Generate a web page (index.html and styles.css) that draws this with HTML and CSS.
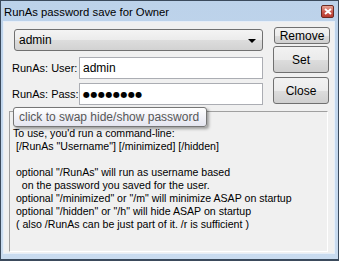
FILE: index.html
```html
<!DOCTYPE html>
<html>
<head>
    <title>RunAs password save for Owner</title>
    <link rel="stylesheet" href="styles.css">
</head>
<body>
    <div class="window">
        <div class="titlebar">
            <span class="title">RunAs password save for Owner</span>
            <div class="close-x">
                <svg width="8" height="7" viewBox="0 0 8 7"><path d="M1 1 L7 6 M7 1 L1 6" stroke="#fff" stroke-width="2"/></svg>
            </div>
        </div>
        <div class="client">
            <div class="top">
                <div class="left">
                    <div class="combo">
                        <span>admin</span>
                        <span class="arrow"></span>
                    </div>
                    <div class="row">
                        <label class="label">RunAs: User:</label>
                        <div class="field">admin</div>
                    </div>
                    <div class="row row-pass">
                        <label class="label">RunAs: Pass:</label>
                        <div class="field dots">&#9679;&#9679;&#9679;&#9679;&#9679;&#9679;&#9679;&#9679;</div>
                    </div>
                </div>
                <div class="buttons">
                    <div class="button btn-remove">Remove</div>
                    <div class="button btn-set">Set</div>
                    <div class="button btn-close">Close</div>
                </div>
            </div>
            <div class="info">To use, you'd run a command-line:
 [/RunAs "Username"] [/minimized] [/hidden]

 optional "/RunAs" will run as username based
   on the password you saved for the user.
 optional "/minimized" or "/m" will minimize ASAP on startup
 optional "/hidden" or "/h" will hide ASAP on startup
 ( also /RunAs can be just part of it. /r is sufficient )</div>
            <div class="tooltip">click to swap hide/show password</div>
        </div>
    </div>
</body>
</html>
```

FILE: styles.css
```css
body {
    margin: 0;
    width: 339px;
    height: 261px;
    overflow: hidden;
    background-color: #2e2e2e;
    font-family: "Liberation Sans", Arial, sans-serif;
}
.window {
    box-sizing: border-box;
    width: 339px;
    height: 261px;
    border: 1px solid #3b4a5c;
    border-bottom-width: 2px;
    background: linear-gradient(#bcd2ea, #c9dbef);
    display: flex;
    flex-direction: column;
}
.titlebar {
    height: 21px;
    display: flex;
    align-items: center;
    padding-left: 3px;
    position: relative;
}
.title {
    font-size: 11.3px;
    color: #000;
}
.close-x {
    position: absolute;
    left: 320px;
    top: 4px;
    width: 11px;
    height: 11px;
    border: 1px solid #6b2a22;
    border-radius: 2px;
    background: linear-gradient(#e6a496, #c9554a 55%, #b93c30);
    display: flex;
    align-items: center;
    justify-content: center;
}
.client {
    position: relative;
    margin: 0 4px 6px 3px;
    height: 231px;
    background-color: #f0f0f0;
    outline: 1px solid #e6eef8;
}
.top {
    display: flex;
}
.left {
    margin-left: 8px;
    width: 251px;
}
.combo {
    box-sizing: border-box;
    margin: 7px 0 0 2px;
    width: 249px;
    height: 22px;
    border: 1px solid #707070;
    border-radius: 3px;
    background: linear-gradient(#f4f4f4, #ebebeb 50%, #dddddd 51%, #d2d2d2);
    display: flex;
    align-items: center;
    padding-left: 4px;
    font-size: 12px;
    position: relative;
}
.arrow {
    position: absolute;
    right: 6px;
    top: 9px;
    border-left: 4px solid transparent;
    border-right: 4px solid transparent;
    border-top: 4px solid #000;
}
.row {
    display: flex;
    align-items: center;
    margin-top: 6px;
}
.row-pass {
    margin-top: 4px;
}
.label {
    width: 67px;
    flex: none;
    font-size: 11px;
    white-space: nowrap;
}
.field {
    box-sizing: border-box;
    width: 185px;
    height: 22px;
    border: 1px solid #abadb3;
    background-color: #fff;
    padding-left: 3px;
    font-size: 12px;
    display: flex;
    align-items: center;
}
.dots {
    font-size: 8px;
    letter-spacing: 0.5px;
    font-family: "DejaVu Sans", sans-serif;
}
.buttons {
    margin-left: 10px;
    display: flex;
    flex-direction: column;
}
.button {
    box-sizing: border-box;
    width: 56px;
    border: 1px solid #707070;
    border-radius: 3px;
    background: linear-gradient(#f2f2f2, #ebebeb 50%, #dddddd 51%, #cfcfcf);
    display: flex;
    align-items: center;
    justify-content: center;
    font-family: "Liberation Sans Narrow", "Liberation Sans", sans-serif;
    font-size: 12px;
    color: #000;
}
.btn-remove {
    margin: 5px 0 0 1px;
    height: 17px;
}
.btn-set {
    margin-top: 2px;
    height: 27px;
}
.btn-close {
    margin-top: 4px;
    height: 27px;
}
.info {
    box-sizing: border-box;
    margin: 6px 0 0 5px;
    width: 319px;
    height: 141px;
    border: 1px solid;
    border-color: #a0a0a0 #fff #fff #a0a0a0;
    padding: 15px 3px 0;
    font-size: 10.6px;
    line-height: 13px;
    white-space: pre;
    color: #000;
}
.tooltip {
    position: absolute;
    left: 9px;
    top: 85px;
    box-sizing: border-box;
    width: 194px;
    height: 20px;
    border: 1px solid #767676;
    border-radius: 3px;
    background: linear-gradient(#ffffff, #e4e5f0);
    box-shadow: 2px 2px 3px rgba(0,0,0,0.35);
    padding-left: 5px;
    font-size: 12px;
    color: #575757;
    display: flex;
    align-items: center;
}
```
